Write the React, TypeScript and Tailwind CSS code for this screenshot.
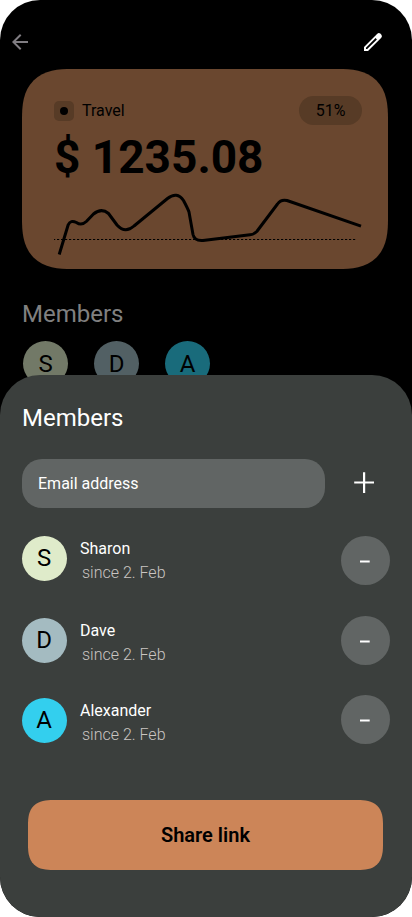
import { MdArrowBack } from 'react-icons/md';

interface Member {
  name: string;
  since: string;
  color: string;
  dimmed: string;
  gap: string;
  buttonOffset: string;
}

const MEMBERS: Member[] = [
  { name: 'Sharon', since: 'since 2. Feb', color: 'bg-[#dfebca]', dimmed: 'bg-[#727967]', gap: 'mt-7', buttonOffset: 'mt-0' },
  { name: 'Dave', since: 'since 2. Feb', color: 'bg-[#a4bbc1]', dimmed: 'bg-[#526064]', gap: 'mt-[33px]', buttonOffset: '-mt-0.5' },
  { name: 'Alexander', since: 'since 2. Feb', color: 'bg-[#33cfee]', dimmed: 'bg-[#196b7b]', gap: 'mt-[31px]', buttonOffset: '-mt-[3px]' },
];

function PencilIcon() {
  return (
    <svg className="size-6" viewBox="0 0 24 24" fill="#fff">
      <path
        fillRule="evenodd"
        d="M3 21V17L16.3 3.7Q17.8 2.4 19.3 3.6L20.4 4.7Q21.6 6.2 20.3 7.7L7 21ZM5 19.1H6.2L15.9 9.4L14.6 8.1L5 17.8Z"
      />
    </svg>
  );
}

function BudgetChart() {
  return (
    <svg className="mt-[5px] block h-[70px] w-[320px]" viewBox="0 0 320 70" fill="none" stroke="#000">
      <path d="M0 49.5H303" strokeWidth="1.2" strokeDasharray="2.2 1.8" strokeDashoffset="1" />
      <path
        d="M5.2 64.5L14.2 34.8Q16.5 29.5 22.4 32.5Q27.5 36 32.3 31.5L39.5 24Q47.5 17.5 54.5 23.5L63 35Q71 44 80 36L113.5 8.5Q123 1 129.5 10.5Q134 19 135 22L139 44.5C140 49 143 51 149 50.5L196 44.8Q199.7 44.5 202.8 41.5L223.5 14Q227 9 233 10.5L307 36.2"
        strokeWidth="3"
        strokeLinejoin="round"
      />
    </svg>
  );
}

function BudgetCard() {
  return (
    <div className="mt-[15px] ml-[22px] h-[200px] w-[366px] rounded-[50px] bg-[#6a472f] pt-[27px] pl-8 [corner-shape:superellipse(1.4)]">
      <div className="flex items-center justify-between pr-[26px]">
        <div className="flex items-center gap-2">
          <div className="flex size-5 items-center justify-center rounded-[5px] bg-[#573b26]">
            <div className="size-2 rounded-full bg-black" />
          </div>
          <span className="text-base">Travel</span>
        </div>
        <div className="flex h-[29px] w-[63px] items-center justify-center rounded-full bg-[#573b26] text-base">51%</div>
      </div>
      <p className="mt-1 text-[46px] leading-[56px] font-bold">$ 1235.08</p>
      <BudgetChart />
    </div>
  );
}

function MemberRow({ member }: { member: Member }) {
  return (
    <li className={`flex h-[49px] items-start ${member.gap}`}>
      <div className={`flex size-[45px] shrink-0 items-center justify-center rounded-full pr-px pb-px text-2xl text-black ${member.color}`}>
        {member.name[0]}
      </div>
      <div className="mt-px ml-[13px] flex-1">
        <p className="text-base leading-6">{member.name}</p>
        <p className="ml-0.5 text-base leading-6 font-light text-[#cac5c2]">{member.since}</p>
      </div>
      <button
        className={`flex size-[49px] items-center justify-center rounded-full bg-[#616564] ${member.buttonOffset}`}
        aria-label={`Remove ${member.name}`}
      >
        <svg className="block size-[49px]" viewBox="0 0 49 49" stroke="#fff" strokeWidth="2">
          <path d="M19 25.5H28.7" />
        </svg>
      </button>
    </li>
  );
}

function MembersSheet() {
  return (
    <section className="absolute inset-x-0 bottom-0 h-[542px] rounded-t-[40px] bg-[#3b3f3d] px-[22px] pt-[27px] text-white">
      <h2 className="text-2xl leading-8">Members</h2>
      <div className="mt-[25px] flex items-center">
        <div className="flex h-[49px] w-[303px] items-center rounded-[20px] bg-[#616564] px-4 text-base">Email address</div>
        <button className="ml-[29px]" aria-label="Add member">
          <svg className="block size-[23px]" viewBox="0 0 23 23" stroke="#fff" strokeWidth="2.2">
            <path d="M0.2 10.5H20M10.1 0.2V21" />
          </svg>
        </button>
      </div>
      <ul>
        {MEMBERS.map(member => (
          <MemberRow key={member.name} member={member} />
        ))}
      </ul>
      <button className="mx-1.5 mt-[53px] h-[70px] w-[355px] rounded-[25px] bg-[#cc8558] text-xl font-semibold text-black [corner-shape:superellipse(1.4)]">
        Share link
      </button>
    </section>
  );
}

export default function App() {
  return (
    <div className="h-[917px] w-[412px] bg-white font-['Roboto',sans-serif]">
      <main className="relative h-full overflow-hidden rounded-[40px] bg-black">
        <header className="flex justify-between pt-[30px] pr-[27px] pl-2">
          <MdArrowBack size={24} color="#807d82" />
          <PencilIcon />
        </header>
        <BudgetCard />
        <h2 className="mt-[29px] ml-[22px] text-2xl leading-8 text-[#808080]">Members</h2>
        <div className="mt-[11px] ml-[23px] flex gap-[26px]">
          {MEMBERS.map(member => (
            <div key={member.name} className={`flex size-[45px] items-center justify-center rounded-full text-2xl ${member.dimmed}`}>
              {member.name[0]}
            </div>
          ))}
        </div>
        <MembersSheet />
      </main>
    </div>
  );
}
